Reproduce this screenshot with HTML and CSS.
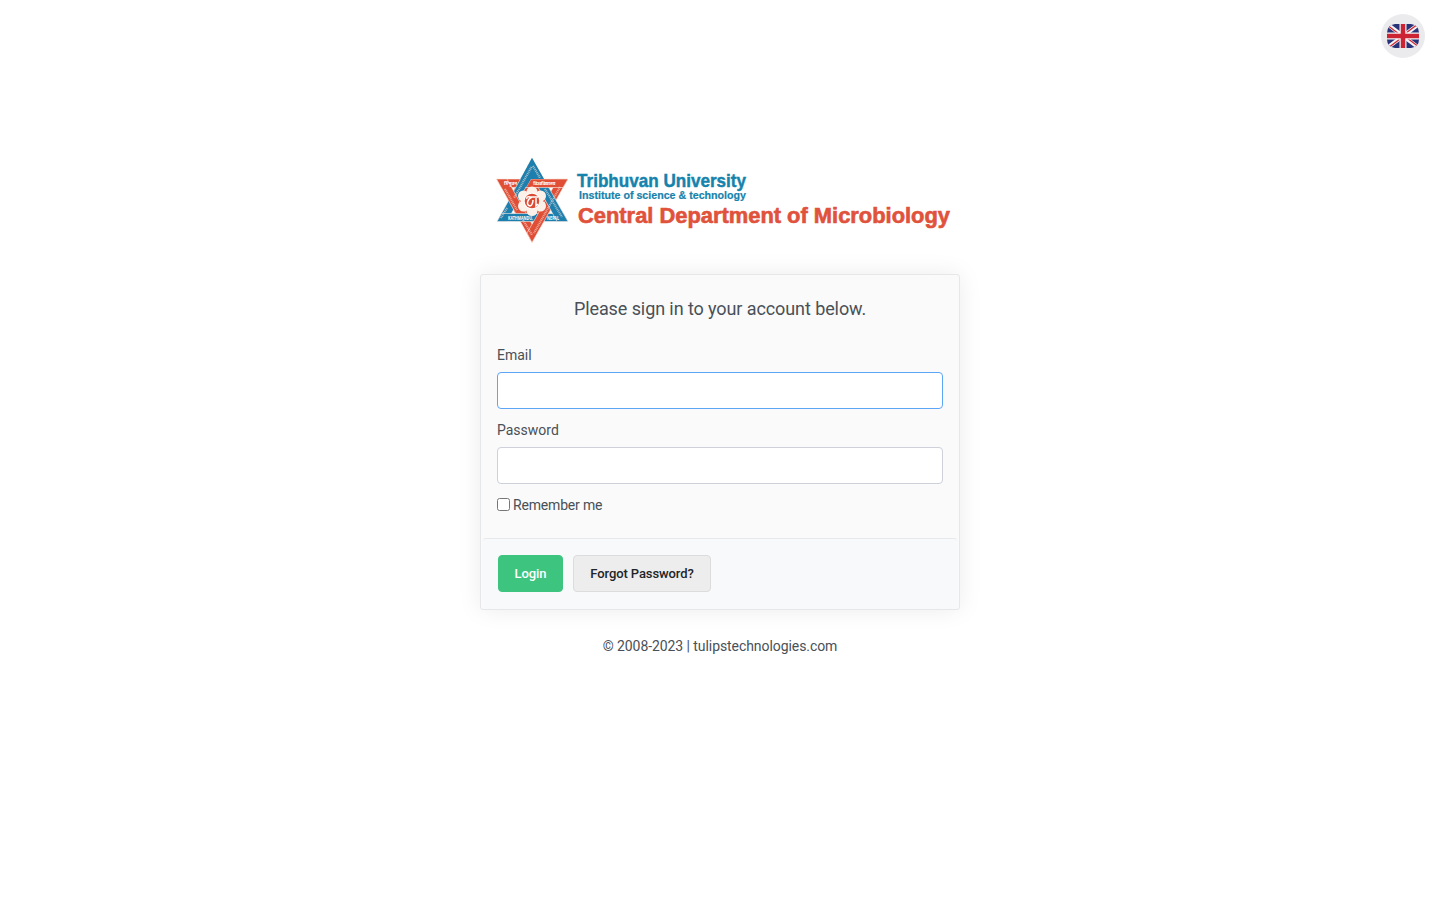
FILE: index.html
```html
<!DOCTYPE html>
<html lang="en">
<head>
<meta charset="utf-8">
<title>Login</title>
<link rel="stylesheet" href="styles.css">
</head>
<body>
<button class="language" type="button" aria-label="English">
  <svg width="32" height="24" viewBox="0 0 32 24">
    <defs><clipPath id="flag"><path d="M8 0H24Q32 1 32 9V15Q32 23 24 24H8Q0 23 0 15V9Q0 1 8 0Z"/></clipPath></defs>
    <g clip-path="url(#flag)">
      <rect width="32" height="24" fill="#29337a"/>
      <path d="M0 0L32 24M32 0L0 24" stroke="#f4f4f6" stroke-width="4"/>
      <path d="M0 1L14 11.500M18 12.500L32 23M31 0L17 10.500M15 13.500L1 24" stroke="#cf2936" stroke-width="1.300"/>
      <path d="M16 0V24M0 12H32" stroke="#f4f4f6" stroke-width="7"/>
      <path d="M16 0V24M0 12H32" stroke="#cc2432" stroke-width="4.500"/>
    </g>
  </svg>
</button>
<main class="page">
  <svg class="logo" width="480" height="120" viewBox="480 140 480 120">
    <path class="seal-red" d="M520 179H544L556 200.500L544 221.500H520L508 200.500Z"/>
    <g stroke="#fbeee8" stroke-width=".6">
      <path class="seal-red" d="M496.500 179H568L563 187.500H501.500Z"/>
      <path class="seal-blue" d="M532 158L537 167L507 221.500H497Z"/>
      <path class="seal-red" d="M496.500 179H507L537 233L532 242.500Z"/>
      <path class="seal-blue" d="M497 221.500L501.500 213.500H563.500L568 221.500Z"/>
      <path class="seal-red" d="M568 179H558L527 233L532 242.500Z"/>
      <path class="seal-blue" d="M532 158L527 167L557 221.500H568Z"/>
      <path class="seal-red" d="M531 179H568L563 187.500H526Z"/>
    </g>
    <path class="seal-blue" d="M532 158L544 179H531L526 187.500L520.500 179Z"/>
    <g fill="#fbf1e9">
      <circle cx="532" cy="192" r="5.500"/><circle cx="540.500" cy="196" r="5.500"/>
      <circle cx="540.500" cy="206" r="5.500"/><circle cx="532" cy="210.500" r="5.500"/>
      <circle cx="523.500" cy="206" r="5.500"/><circle cx="523.500" cy="196" r="5.500"/>
    </g>
    <circle cx="532" cy="201" r="8.300" fill="#fff"/>
    <circle cx="532" cy="201" r="7.300" fill="#dc4c34"/>
    <path d="M527 199Q526 196 530 197H538M532 197C527 199 526 205 530 206C532 206 533 202 533 200M536 198V206L538 204" fill="none" stroke="#fff" stroke-width="1.500"/>
    <g class="seal-text">
      <text x="504" y="184.500" textLength="13">त्रिभुवन</text>
      <text x="533" y="184.500" textLength="22">विश्वविद्यालय</text>
      <text x="508" y="220" textLength="25" lengthAdjust="spacingAndGlyphs">KATHMANDU,</text>
      <text x="547" y="220" textLength="12" lengthAdjust="spacingAndGlyphs">NEPAL</text>
    </g>
    <g stroke="#f4ded8" stroke-width="2.200" stroke-dasharray="1 .8" fill="none" opacity=".65">
      <path d="M531.500 167L514 198M507 208L501 218M533 166L540 178M545 189L562 217M505 189L517 210M560 187L534 233M523 220L532 235"/>
    </g>
    <g class="logo-text">
      <text class="blue" x="577" y="186.500" font-size="18.500" textLength="169" lengthAdjust="spacingAndGlyphs">Tribhuvan University</text>
      <text class="blue small" x="579" y="198.800" font-size="10.500" textLength="167" lengthAdjust="spacingAndGlyphs">Institute of science &amp; technology</text>
      <text class="red" x="578" y="223" font-size="21.300" textLength="372" lengthAdjust="spacingAndGlyphs">Central Department of Microbiology</text>
    </g>
  </svg>
  <form class="card">
    <div class="card-body">
      <h1 class="title">Please sign in to your account below.</h1>
      <label class="label" for="email">Email</label>
      <input class="input active" id="email" type="email">
      <label class="label" for="password">Password</label>
      <input class="input" id="password" type="password">
      <label class="remember"><input class="check" type="checkbox"><span>Remember me</span></label>
    </div>
    <div class="card-footer">
      <button class="button primary" type="button">Login</button>
      <button class="button" type="button">Forgot Password?</button>
    </div>
  </form>
  <p class="copyright">© 2008-2023 | tulipstechnologies.com</p>
</main>
</body>
</html>
```
FILE: styles.css
```css
* { box-sizing: border-box; }
body { margin: 0; background: #fff; color: #495057; font: 14px/21px Roboto, sans-serif; }
.language { position: absolute; top: 14px; right: 15px; width: 44px; height: 44px; display: flex; align-items: center; justify-content: center; padding: 0; border: 0; border-radius: 50%; background: #ebebed; }
.page { width: 480px; margin: 0 auto; padding-top: 140px; }
.logo { display: block; }
.logo-text { font-family: "Liberation Sans", sans-serif; font-weight: 700; }
.seal-text { font: 700 4.5px "Noto Sans", sans-serif; fill: #fff; }
.seal-red { fill: #e04e36; }
.seal-blue { fill: #1c7fae; }
.blue { fill: #1683ad; stroke: #1683ad; stroke-width: .45px; }
.small { stroke-width: .2px; }
.red { fill: #e0523b; stroke: #e0523b; stroke-width: .6px; }
.card { margin-top: 14px; height: 336px; display: flex; flex-direction: column; border: 1px solid #e6e7e9; border-radius: 3px; background: #fafafa; box-shadow: 0 0 25px rgba(0,0,0,.08); }
.card-body { flex: 1; padding: 20px 16px 0; display: flex; flex-direction: column; }
.title { margin: 0 0 23px; font-size: 18px; line-height: 27px; font-weight: 400; letter-spacing: -.09px; text-align: center; }
.label { line-height: 21px; margin-bottom: 6px; }
.input { width: 100%; height: 37px; padding: 8px 12px; margin: 0 0 11px; border: 1px solid #ced0da; border-radius: 4px; background: #fff; font: inherit; outline: 0; }
.active { border-color: #5da5f7; }
.remember { display: flex; align-items: flex-start; gap: 3px; line-height: 21px; letter-spacing: -.17px; }
.check { width: 13px; height: 13px; margin: 3px 0 0; }
.card-footer { height: 71px; margin: 0 2px; padding: 16px 15px; display: flex; gap: 10px; border-top: 1px solid #e6e9ec; border-radius: 3px; background: #f8f9fb; }
.button { width: 138px; height: 37px; padding: 0; border: 1px solid #dcdcdc; border-radius: 4px; background: #ededed; color: #212529; font: 500 13px/20px Roboto, sans-serif; letter-spacing: -.1px; white-space: nowrap; }
.primary { width: 65px; border-color: #3dc57f; background: #3dc57f; color: #fff; }
.copyright { margin: 26px 0 0; letter-spacing: -.07px; text-align: center; }
```
